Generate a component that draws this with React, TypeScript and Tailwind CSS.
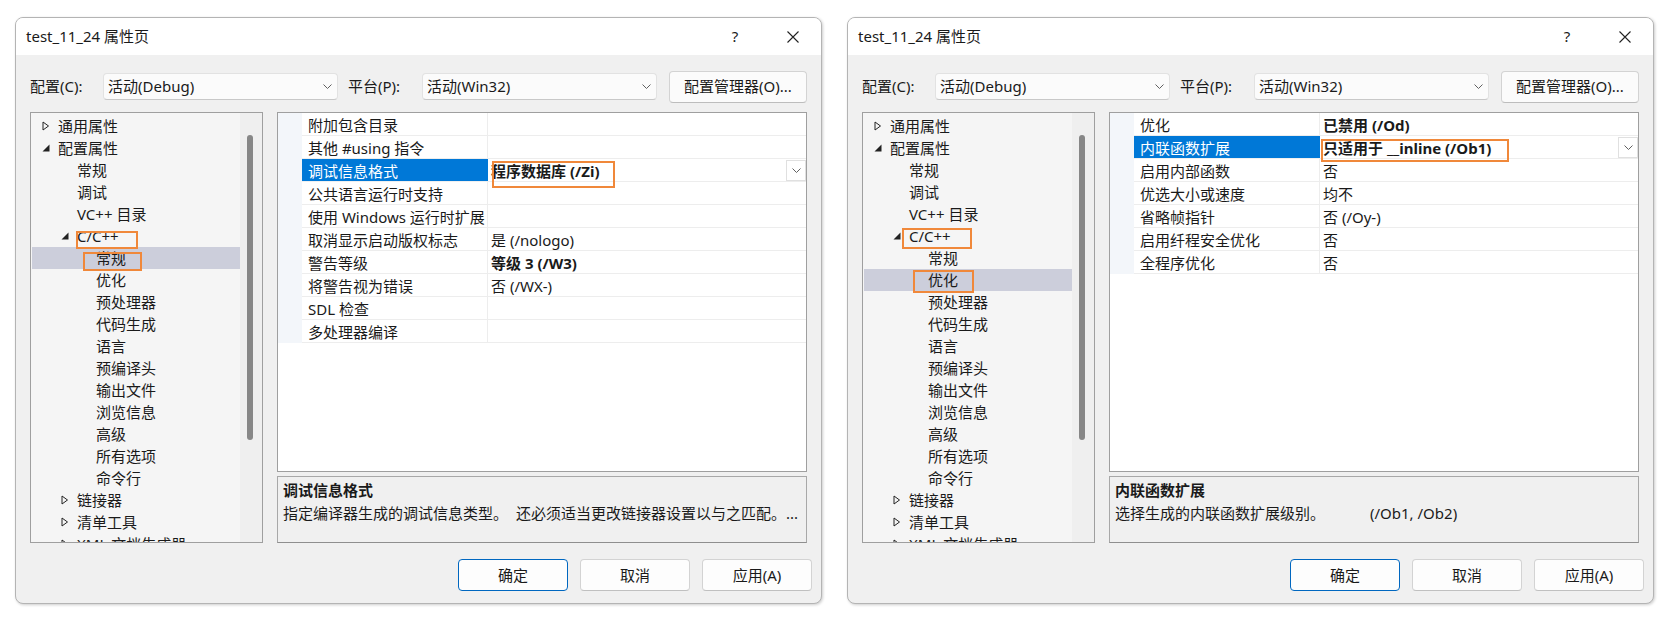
import React from 'react';

type TreeNode = { label: string; level: 0 | 1 | 2; arrow?: 'open' | 'closed' };
type GridRow = { name: string; value?: string; bold?: boolean; selected?: boolean };

const tree: TreeNode[] = [
  { label: '通用属性', level: 0, arrow: 'closed' },
  { label: '配置属性', level: 0, arrow: 'open' },
  { label: '常规', level: 1 },
  { label: '调试', level: 1 },
  { label: 'VC++ 目录', level: 1 },
  { label: 'C/C++', level: 1, arrow: 'open' },
  { label: '常规', level: 2 },
  { label: '优化', level: 2 },
  { label: '预处理器', level: 2 },
  { label: '代码生成', level: 2 },
  { label: '语言', level: 2 },
  { label: '预编译头', level: 2 },
  { label: '输出文件', level: 2 },
  { label: '浏览信息', level: 2 },
  { label: '高级', level: 2 },
  { label: '所有选项', level: 2 },
  { label: '命令行', level: 2 },
  { label: '链接器', level: 1, arrow: 'closed' },
  { label: '清单工具', level: 1, arrow: 'closed' },
  { label: 'XML 文档生成器', level: 1, arrow: 'closed' },
];

const indent = ['w-[10px]', 'w-[29px]', 'w-[48px]'];

const generalRows: GridRow[] = [
  { name: '附加包含目录' },
  { name: '其他 #using 指令' },
  { name: '调试信息格式', value: '程序数据库 (/Zi)', bold: true, selected: true },
  { name: '公共语言运行时支持' },
  { name: '使用 Windows 运行时扩展' },
  { name: '取消显示启动版权标志', value: '是 (/nologo)' },
  { name: '警告等级', value: '等级 3 (/W3)', bold: true },
  { name: '将警告视为错误', value: '否 (/WX-)' },
  { name: 'SDL 检查' },
  { name: '多处理器编译' },
];

const optimizeRows: GridRow[] = [
  { name: '优化', value: '已禁用 (/Od)', bold: true },
  { name: '内联函数扩展', value: '只适用于 __inline (/Ob1)', bold: true, selected: true },
  { name: '启用内部函数', value: '否' },
  { name: '优选大小或速度', value: '均不' },
  { name: '省略帧指针', value: '否 (/Oy-)' },
  { name: '启用纤程安全优化', value: '否' },
  { name: '全程序优化', value: '否' },
];

const Chevron = () => (
  <svg width="9" height="5" viewBox="0 0 9 5">
    <path d="M0.5 0.5 L4.5 4.5 L8.5 0.5" fill="none" stroke="#606060" strokeWidth="1" />
  </svg>
);

const Arrow = ({ kind }: { kind?: 'open' | 'closed' }) => {
  if (kind === 'closed')
    return (
      <svg width="8" height="10" viewBox="0 0 8 10">
        <path d="M1 1 L6.5 5 L1 9 Z" fill="none" stroke="#222" strokeWidth="1" />
      </svg>
    );
  if (kind === 'open')
    return (
      <svg width="8" height="8" viewBox="0 0 8 8">
        <path d="M7.5 0.5 L7.5 7.5 L0.5 7.5 Z" fill="#222" />
      </svg>
    );
  return null;
};

const Select = ({ text }: { text: string }) => (
  <div className="w-[235px] h-[27px] flex items-center justify-between pl-[4px] pr-[5px] bg-[#fbfbfb] border border-[#e2e2e2] border-b-[#c8c8c8] rounded-[4px]">
    <span>{text}</span>
    <Chevron />
  </div>
);

const Btn = ({ label, primary }: { label: string; primary?: boolean }) => (
  <div
    className={
      primary
        ? 'w-[110px] h-[32px] flex items-center justify-center bg-[#fdfdfd] border border-[#0067c0] rounded-[4px]'
        : 'w-[110px] h-[32px] flex items-center justify-center bg-[#fdfdfd] border border-[#d3d3d3] border-b-[#c0c0c0] rounded-[4px]'
    }
  >
    {label}
  </div>
);

type DialogProps = {
  selectedTree: number;
  rows: GridRow[];
  descTitle: string;
  desc: React.ReactNode;
  marks: string[];
};

const Dialog = ({ selectedTree, rows, descTitle, desc, marks }: DialogProps) => {
  return (
    <div className="relative w-[807px] h-[587px] flex flex-col border border-[#b4b4b4] rounded-[8px] overflow-hidden bg-[#f0f0f0] shadow-[1px_1px_3px_rgba(0,0,0,0.2)]">
      {/* title bar */}
      <div className="h-[37px] bg-white flex items-center pl-[10px] pr-[18px]">
        <span className="flex-1">test_11_24 属性页</span>
        <span className="w-[20px] text-center text-[15px]">?</span>
        <span className="w-[20px] ml-[38px] flex items-center justify-center">
          <svg width="12" height="12" viewBox="0 0 12 12">
            <path d="M0.5 0.5 L11.5 11.5 M11.5 0.5 L0.5 11.5" stroke="#222" strokeWidth="1.1" />
          </svg>
        </span>
      </div>

      <div className="flex-1 flex flex-col pl-[14px]">
        {/* config row */}
        <div className="h-[33px] mt-[15px] flex items-center">
          <span className="w-[73px]">配置(C):</span>
          <Select text="活动(Debug)" />
          <span className="w-[74px] ml-[10px]">平台(P):</span>
          <Select text="活动(Win32)" />
          <div className="w-[138px] h-[32px] ml-[12px] flex items-center justify-center bg-[#fbfbfb] border border-[#d3d3d3] border-b-[#bdbdbd] rounded-[4px]">
            配置管理器(O)...
          </div>
        </div>

        <div className="flex mt-[9px]">
          {/* tree */}
          <div className="w-[233px] h-[431px] border border-[#9f9f9f] bg-[#f5f5f5] flex overflow-hidden">
            <div className="flex-1 pl-[1px] pt-[2px] overflow-hidden">
              {tree.map((n, i) => (
                <div
                  key={i}
                  className={
                    i === selectedTree
                      ? 'h-[22px] flex items-center whitespace-nowrap bg-[#cccedb]'
                      : 'h-[22px] flex items-center whitespace-nowrap'
                  }
                >
                  <span className={indent[n.level] + ' shrink-0'} />
                  <span className="w-[16px] shrink-0 flex items-center">
                    <Arrow kind={n.arrow} />
                  </span>
                  <span>{n.label}</span>
                </div>
              ))}
            </div>
            <div className="w-[22px] bg-[#efefef] pt-[22px] pl-[7px]">
              <div className="w-[6px] h-[305px] bg-[#878787] rounded-[3px]" />
            </div>
          </div>

          {/* grid + description */}
          <div className="w-[530px] ml-[14px] flex flex-col">
            <div className="h-[360px] border border-[#9f9f9f] bg-white">
              {rows.map((r, i) => (
                <div key={i} className="h-[23px] flex">
                  <div className="w-[24px] bg-[#f3f6fa]" />
                  <div
                    className={
                      r.selected
                        ? 'w-[186px] pl-[6px] pt-[2px] leading-[21px] whitespace-nowrap overflow-hidden bg-[#0078d7] text-white border-b border-[#f0f0f0]'
                        : 'w-[186px] pl-[6px] pt-[2px] leading-[21px] whitespace-nowrap overflow-hidden border-r border-b border-[#ededed]'
                    }
                  >
                    {r.name}
                  </div>
                  <div
                    className={
                      r.bold
                        ? 'flex-1 pl-[3px] flex items-center justify-between font-bold border-b border-[#ededed]'
                        : 'flex-1 pl-[3px] flex items-center justify-between border-b border-[#ededed]'
                    }
                  >
                    <span className="pt-[2px]">{r.value ?? ''}</span>
                    {r.selected && (
                      <span className="w-[20px] h-[21px] flex items-center justify-center bg-white border border-[#e0e0e0]">
                        <Chevron />
                      </span>
                    )}
                  </div>
                </div>
              ))}
            </div>
            <div className="h-[67px] mt-[4px] border border-[#a8a8a8] border-b-[#8f8f8f] bg-[#f0f0f0] pl-[5px] pt-[2px] leading-[23px]">
              <div className="font-bold">{descTitle}</div>
              <div className="whitespace-nowrap">{desc}</div>
            </div>
          </div>
        </div>

        {/* buttons */}
        <div className="flex justify-end gap-[12px] pr-[9px] mt-[16px]">
          <Btn label="确定" primary />
          <Btn label="取消" />
          <Btn label="应用(A)" />
        </div>
      </div>

      {marks.map((m, i) => (
        <div key={i} className={'absolute border-2 border-[#f0883a] ' + m} />
      ))}
    </div>
  );
};

export default function App() {
  return (
    <div className="w-[1675px] h-[624px] bg-white flex gap-[25px] pl-[15px] pt-[17px] text-[15px] text-[#1a1a1a] font-['Noto_Sans','Noto_Sans_CJK_SC',sans-serif]">
      <Dialog
        selectedTree={6}
        rows={generalRows}
        descTitle="调试信息格式"
        desc={
          <>
            指定编译器生成的调试信息类型。<span className="ml-[8px]">还必须适当更改链接器设置以与之匹配。...</span>
          </>
        }
        marks={[
          'left-[60px] top-[213px] w-[62px] h-[18px]',
          'left-[67px] top-[234px] w-[59px] h-[19px]',
          'left-[476px] top-[143px] w-[123px] h-[27px]',
        ]}
      />
      <Dialog
        selectedTree={7}
        rows={optimizeRows}
        descTitle="内联函数扩展"
        desc={
          <>
            选择生成的内联函数扩展级别。<span className="ml-[45px]">(/Ob1, /Ob2)</span>
          </>
        }
        marks={[
          'left-[54px] top-[210px] w-[70px] h-[21px]',
          'left-[65px] top-[252px] w-[61px] h-[23px]',
          'left-[473px] top-[121px] w-[188px] h-[23px]',
        ]}
      />
    </div>
  );
}
